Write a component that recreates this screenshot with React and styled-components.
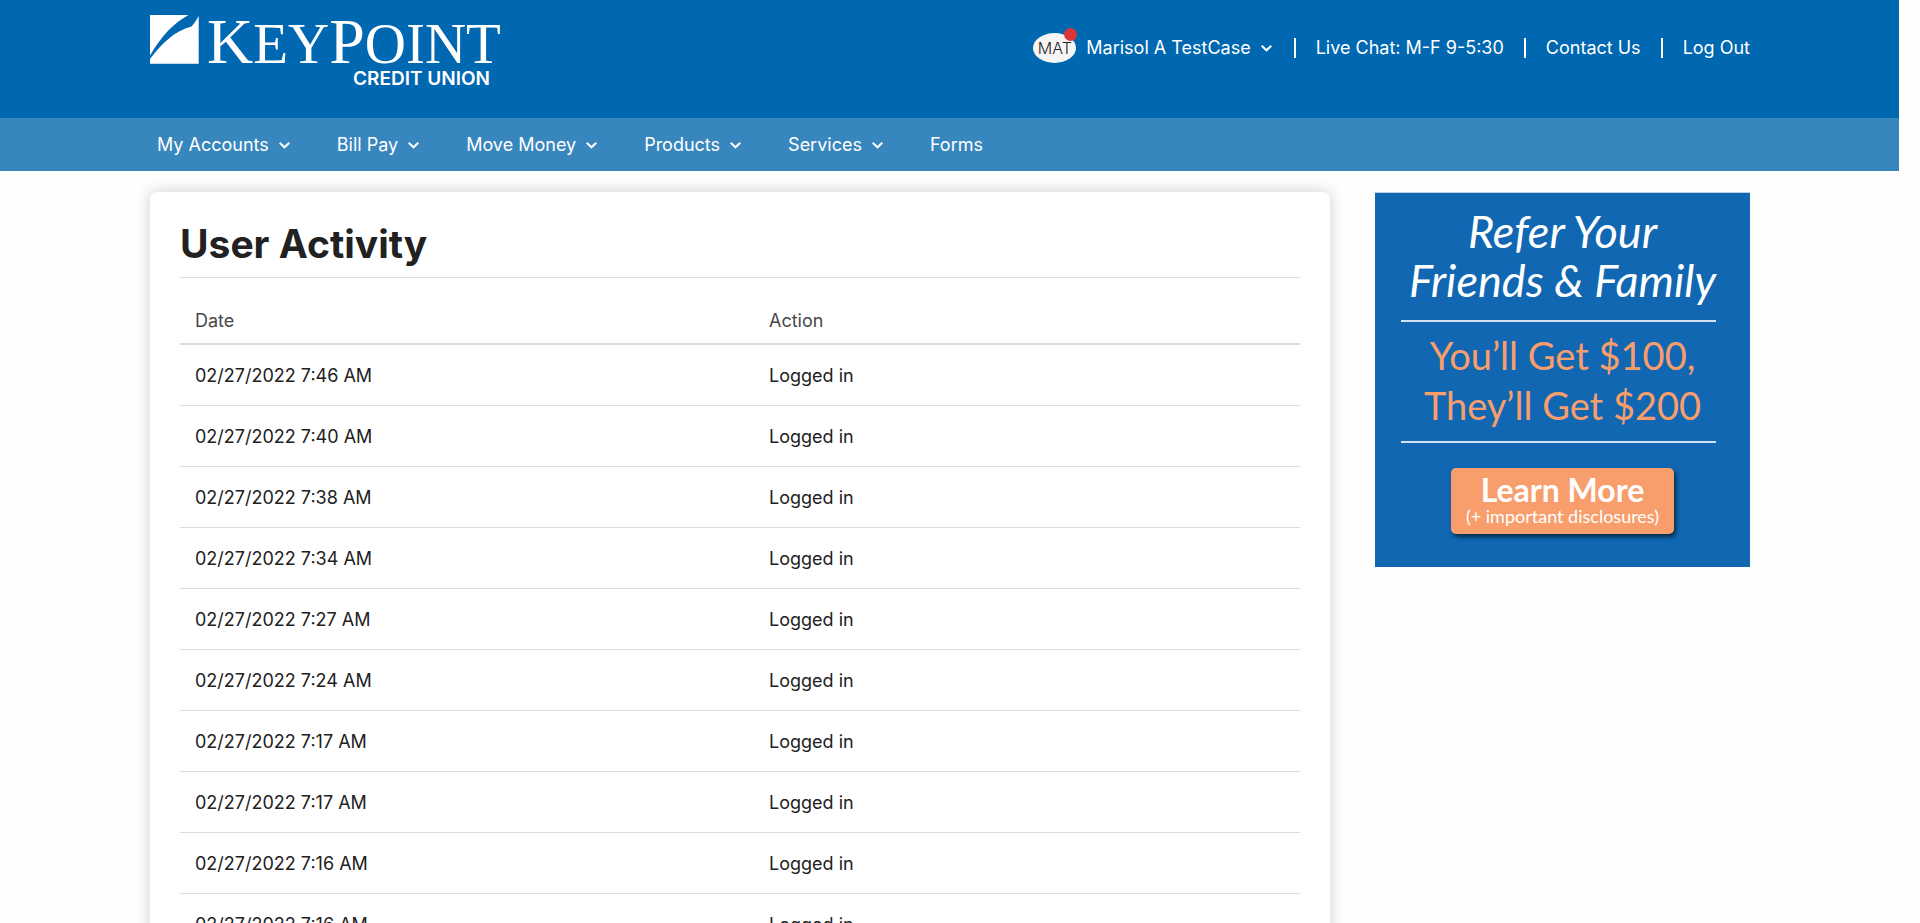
import React from "react";
import styled, { createGlobalStyle } from "styled-components";

const GlobalStyle = createGlobalStyle`
  * { box-sizing: border-box; }
  body {
    margin: 0;
    background: #fefefe;
    color: #212121;
    font-family: Inter, "Open Sans", sans-serif;
    font-size: 18px;
    line-height: 24px;
  }
  a { color: inherit; text-decoration: none; }
`;

const Page = styled.div`
  padding-right: 21px;
`;

const Inner = styled.div`
  padding: 0 149px 0 150px;
`;

const Header = styled.header`
  background: #0067b1;
  color: #fff;
`;

const HeaderRow = styled(Inner)`
  display: flex;
  justify-content: space-between;
  align-items: flex-start;
  min-height: 118px;
`;

const Brand = styled.a`
  display: flex;
  gap: 8px;
  padding-top: 15px;
`;

const BrandText = styled.span`
  display: flex;
  flex-direction: column;
  align-items: flex-end;
`;

const BrandName = styled.span`
  font-family: "Liberation Serif", serif;
  font-size: 57px;
  line-height: 54px;
  white-space: nowrap;
`;

const BigCap = styled.span`
  font-size: 64px;
`;

const BrandSub = styled.span`
  padding-right: 11px;
  font-size: 19px;
  font-weight: 600;
  line-height: 16px;
`;

const UserLinks = styled.nav`
  display: flex;
  align-items: center;
  padding-top: 33px;
`;

const UserLink = styled.a`
  padding: 0 20px;
  line-height: 20px;
  white-space: nowrap;
  border-left: 2px solid #fff;

  &:last-child { padding-right: 0; }
`;

const Menu = styled.button`
  display: flex;
  align-items: center;
  gap: 10px;
  padding: 0;
  border: 0;
  background: none;
  color: inherit;
  font: inherit;
  white-space: nowrap;
`;

const UserMenu = styled(Menu)`
  margin-right: 22px;
`;

const Avatar = styled.span`
  position: relative;
  display: flex;
  align-items: center;
  justify-content: center;
  width: 43px;
  height: 30px;
  border-radius: 50%;
  background: #f5f5f5;
  color: #212121;
  font-size: 16px;
  font-weight: 300;
`;

const Alert = styled.span`
  position: absolute;
  top: -5px;
  right: -1px;
  width: 13px;
  height: 13px;
  border-radius: 50%;
  background: #dd3535;
`;

const NavBar = styled.nav`
  background: #3886be;
  color: #fff;
`;

const NavList = styled.ul`
  display: flex;
  gap: 47px;
  margin: 0;
  padding: 15px 7px 14px;
  list-style: none;
`;

const Main = styled(Inner)`
  display: flex;
  align-items: flex-start;
  gap: 45px;
  padding-top: 21px;
`;

const Card = styled.main`
  flex: 1;
  min-width: 0;
  padding: 30px;
  border-radius: 7px;
  background: #fff;
  box-shadow: 0 0 16px rgba(0, 0, 0, 0.2);
`;

const Title = styled.h1`
  margin: 0 0 20px;
  padding-bottom: 11px;
  border-bottom: 1px solid #dedede;
  font-size: 39px;
  font-weight: 700;
  line-height: 44px;
`;

const Table = styled.table`
  width: 100%;
  table-layout: fixed;
  border-collapse: separate;
  border-spacing: 0;
`;

const HeadCell = styled.th`
  width: ${(p) => p.$width || "auto"};
  height: 47px;
  padding: 0 15px;
  border-bottom: 2px solid #dedede;
  color: #484848;
  font-weight: 400;
  text-align: left;
`;

const Cell = styled.td`
  height: 61px;
  padding: 2px 15px 0;
  border-bottom: 1px solid #dedede;
`;

const Promo = styled.aside`
  display: flex;
  flex-direction: column;
  align-items: center;
  flex: none;
  width: 375px;
  height: 375px;
  padding-top: 14px;
  border-top: 1px solid #b8d5e8;
  background: #1167b2;
  color: #fff;
  font-family: Lato, sans-serif;
  text-align: center;
`;

const PromoLead = styled.p`
  margin: 0 0 15px;
  font-size: 45px;
  font-style: italic;
  line-height: 49px;
`;

const PromoOffer = styled.p`
  margin: 8px 0 11px;
  color: #f89e6c;
  font-size: 38px;
  line-height: 50px;
`;

const PromoRule = styled.hr`
  width: 315px;
  height: 2px;
  margin: 0 8px 0 0;
  border: 0;
  background: #d3e3f1;
`;

const PromoLink = styled.a`
  display: flex;
  flex-direction: column;
  align-items: center;
  width: 223px;
  height: 66px;
  margin-top: 25px;
  padding-top: 6px;
  border-radius: 5px;
  background: #f89e6c;
  box-shadow: 2px 3px 4px rgba(0, 0, 0, 0.6);
  font-size: 18px;
  line-height: 20px;
`;

const PromoLinkTitle = styled.strong`
  font-size: 32px;
  line-height: 32px;
`;

const Mark = () => (
  <svg width="49" height="49" viewBox="0 0 49 49" fill="#fff" aria-hidden="true">
    <path d="M0 0H38.5C24 8 12 20 0 40.5Z" />
    <path d="M0 44C11 29 25 15.500 41.500 11.500C44 8.500 46.500 5 48.700 1V48.700H0Z" />
  </svg>
);

const Chevron = () => (
  <svg width="11" height="7" viewBox="0 0 11 7" fill="none" stroke="#fff" strokeWidth="2" aria-hidden="true">
    <path d="M0.700 0.800L5.500 5.300L10.300 0.800" />
  </svg>
);

const menus = ["My Accounts", "Bill Pay", "Move Money", "Products", "Services"];

const times = ["7:46", "7:40", "7:38", "7:34", "7:27", "7:24", "7:17", "7:17", "7:16", "7:16"];

export default function App() {
  return (
    <Page>
      <GlobalStyle />
      <Header>
        <HeaderRow>
          <Brand href="#home">
            <Mark />
            <BrandText>
              <BrandName>
                <BigCap>K</BigCap>EY<BigCap>P</BigCap>OINT
              </BrandName>
              <BrandSub>CREDIT UNION</BrandSub>
            </BrandText>
          </Brand>
          <UserLinks aria-label="Account">
            <UserMenu type="button">
              <Avatar>
                MAT
                <Alert />
              </Avatar>
              Marisol A TestCase
              <Chevron />
            </UserMenu>
            <UserLink href="#chat">Live Chat: M-F 9-5:30</UserLink>
            <UserLink href="#contact">Contact Us</UserLink>
            <UserLink href="#logout">Log Out</UserLink>
          </UserLinks>
        </HeaderRow>
      </Header>
      <NavBar aria-label="Main">
        <Inner>
          <NavList>
            {menus.map((name) => (
              <li key={name}>
                <Menu type="button">
                  {name}
                  <Chevron />
                </Menu>
              </li>
            ))}
            <li>
              <a href="#forms">Forms</a>
            </li>
          </NavList>
        </Inner>
      </NavBar>
      <Main as="div">
        <Card>
          <Title>User Activity</Title>
          <Table>
            <thead>
              <tr>
                <HeadCell $width="51.25%">Date</HeadCell>
                <HeadCell>Action</HeadCell>
              </tr>
            </thead>
            <tbody>
              {times.map((time, i) => (
                <tr key={i}>
                  <Cell>02/27/2022 {time} AM</Cell>
                  <Cell>Logged in</Cell>
                </tr>
              ))}
            </tbody>
          </Table>
        </Card>
        <Promo>
          <PromoLead>
            Refer Your
            <br />
            Friends &amp; Family
          </PromoLead>
          <PromoRule />
          <PromoOffer>
            You’ll Get $100,
            <br />
            They’ll Get $200
          </PromoOffer>
          <PromoRule />
          <PromoLink href="#refer">
            <PromoLinkTitle>Learn More</PromoLinkTitle>
            (+ important disclosures)
          </PromoLink>
        </Promo>
      </Main>
    </Page>
  );
}
